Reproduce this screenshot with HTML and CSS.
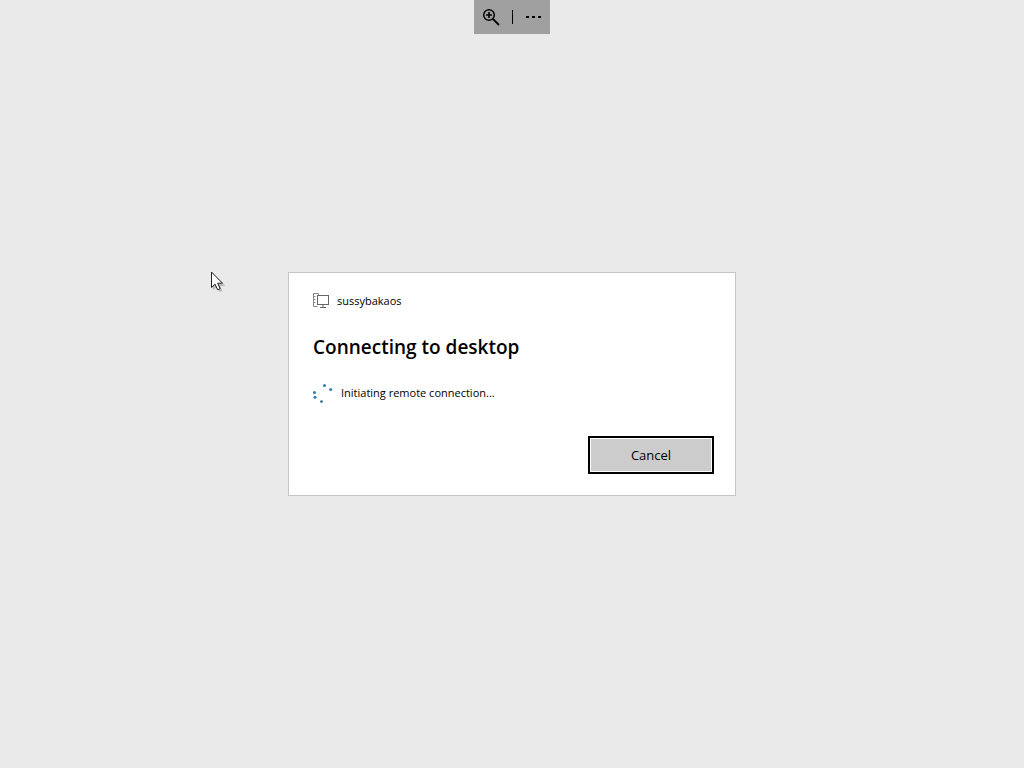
FILE: index.html
```html
<!DOCTYPE html>
<html lang="en">
<head>
    <meta charset="UTF-8">
    <meta name="viewport" content="width=device-width, initial-scale=1.0">
    <title>Remote Desktop</title>
    <link rel="stylesheet" href="styles.css">
</head>
<body>
    <div class="toolbar">
        <button class="tool" type="button" aria-label="Zoom in">
            <svg width="18" height="18" viewBox="0 0 18 18" fill="none" stroke="#000">
                <circle cx="7" cy="7" r="5.3" stroke-width="1.5"/>
                <path d="M11 11l6 6" stroke-width="1.8"/>
                <path d="M4 7h6M7 4v6" stroke-width="1.6"/>
            </svg>
        </button>
        <span class="divider"></span>
        <button class="tool" type="button" aria-label="More">
            <svg width="18" height="18" viewBox="0 0 18 18">
                <rect x="1" y="8" width="3" height="2"/>
                <rect x="7" y="8" width="3" height="2"/>
                <rect x="13" y="8" width="3" height="2"/>
            </svg>
        </button>
    </div>

    <main class="dialog" role="dialog" aria-labelledby="title">
        <div class="computer">
            <svg width="16" height="16" viewBox="0 0 16 16" fill="none" stroke="#666">
                <path d="M5.500 2V.5h-5v13h4M.5 3.500h2M.5 6.500h2M.5 9.500h2" stroke="#888"/>
                <rect x="4.500" y="2.500" width="11" height="9"/>
                <path d="M10 12v2M7 14.500h6"/>
            </svg>
            <span>sussybakaos</span>
        </div>
        <h1 class="title" id="title">Connecting to desktop</h1>
        <div class="status" role="status">
            <svg width="20" height="20" viewBox="0 0 20 20" fill="#2b7fb0">
                <circle cx="11.500" cy="2.500" r="1.500"/>
                <circle cx="17.700" cy="6.500" r="1.500"/>
                <circle cx="1.500" cy="9.500" r="1.500"/>
                <circle cx="2" cy="14.200" r="1.500"/>
                <circle cx="8.500" cy="18.600" r="1.400" fill="#37708c"/>
            </svg>
            <span>Initiating remote connection...</span>
        </div>
        <button class="cancel" type="button">Cancel</button>
    </main>

    <svg class="cursor" width="16" height="22" viewBox="0 0 16 22">
        <path d="M3 3v16l4-3 2.500 5 3-1-2-5h5z" fill="#000" opacity=".2"/>
        <path d="M1.500 1v15.500l3.600-3.300 2.500 5.600 2.500-1.100-2.400-5.500h4.800z" fill="#fff" stroke="#222"/>
    </svg>
</body>
</html>
```
FILE: styles.css
```css
* {
    box-sizing: border-box;
}

body {
    font-family: "Open Sans", "Noto Sans", sans-serif;
    font-size: 11px;
    color: #000;
    background-color: #eaeaea;
    margin: 0;
    min-height: 100vh;
    display: flex;
    align-items: center;
    justify-content: center;
}

.toolbar {
    position: absolute;
    top: 0;
    left: 50%;
    transform: translateX(-50%);
    display: flex;
    align-items: center;
    background-color: #a0a0a0;
}

.tool {
    display: flex;
    padding: 8px;
    border: none;
    background: none;
}

.tool:last-child {
    padding-right: 7px;
}

.divider {
    width: 1px;
    height: 14px;
    margin: 0 4px;
    background-color: #000;
}

.dialog {
    width: 100%;
    max-width: 448px;
    padding: 16px 21px 21px 24px;
    display: flex;
    flex-direction: column;
    background-color: #fff;
    border: 1px solid #c6c6c6;
}

.computer,
.status {
    display: flex;
    align-items: center;
    gap: 8px;
    line-height: 24px;
}

.title {
    font-size: 19px;
    font-weight: 600;
    line-height: 28px;
    margin: 20px 0;
}

.cancel {
    align-self: flex-end;
    width: 126px;
    height: 38px;
    margin-top: 31px;
    padding: 0;
    font-family: inherit;
    font-size: 13px;
    color: #000;
    background-color: #ccc;
    border: 2px solid #000;
    box-shadow: inset 0 0 0 1px #fff;
}

/* mouse pointer over the empty desktop */
.cursor {
    position: absolute;
    top: 271px;
    left: 210px;
}
```
